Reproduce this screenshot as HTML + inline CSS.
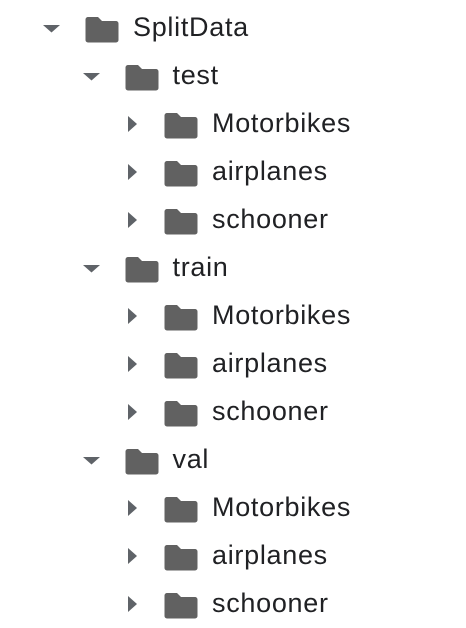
<!DOCTYPE html>
<html><head><style>
body{margin:0;width:466px;height:624px;background:#fff;overflow:hidden;position:relative;font-family:"Liberation Sans",Arial,sans-serif}
.r{position:absolute;height:48px;left:0;width:466px}
.a{position:absolute;top:0}
.f{position:absolute;top:11px}
.t{position:absolute;top:7px;font-size:27px;letter-spacing:0.7px;color:#202124;line-height:32px}
</style></head><body>
<div id="c"></div>
<script>
const rows=[[0,'d','SplitData'],[1,'d','test'],[2,'r','Motorbikes'],[2,'r','airplanes'],[2,'r','schooner'],[1,'d','train'],[2,'r','Motorbikes'],[2,'r','airplanes'],[2,'r','schooner'],[1,'d','val'],[2,'r','Motorbikes'],[2,'r','airplanes'],[2,'r','schooner']];
let h='';
rows.forEach((r,i)=>{
 const lv=r[0],y=4+i*48,ox=lv*39.5;
 const arr=r[1]=='d'
  ?`<svg class="a" style="left:${43+ox}px" width="18" height="48"><path d="M0 21h17l-8.5 7.5z" fill="#5f6368"/></svg>`
  :`<svg class="a" style="left:${128+ox-79}px" width="12" height="48"><path d="M0 16v16l9-8z" fill="#5f6368"/></svg>`;
 const fold=`<svg class="f" style="left:${85+ox}px" width="34" height="28" viewBox="0 0 34 28"><path d="M3 2h10l4 4h14a2.5 2.5 0 0 1 2.5 2.5V25a2.5 2.5 0 0 1-2.5 2.5H3A2.5 2.5 0 0 1 .5 25V4.5A2.5 2.5 0 0 1 3 2z" fill="#616161"/></svg>`;
 h+=`<div class="r" style="top:${y}px">${arr}${fold}<div class="t" style="left:${133+ox}px">${r[2]}</div></div>`;
});
document.getElementById('c').innerHTML=h;
</script>
</body></html>
